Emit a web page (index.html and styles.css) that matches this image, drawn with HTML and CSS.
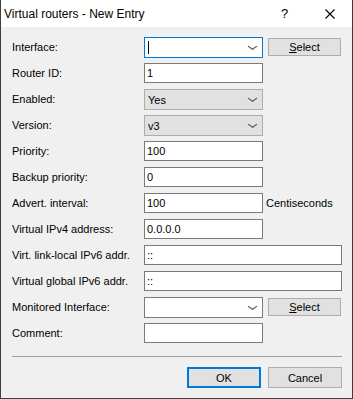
FILE: index.html
```html
<!DOCTYPE html>
<html>
    <head>
        <title> Virtual routers - New Entry </title>
        <meta charset="utf-8"/>
        <link rel="stylesheet" href="styles.css">
    </head>
    <body>
        <div class="dialog">

            <header class="titlebar">
                <span class="title">Virtual routers - New Entry</span>
                <span class="caption-button help">?</span>
                <span class="caption-button close">
                    <svg width="10" height="10" viewBox="0 0 10 10">
                        <path d="M0.5 0.5 L9.5 9.5 M9.5 0.5 L0.5 9.5" stroke="#000" stroke-width="1.1" fill="none"/>
                    </svg>
                </span>
            </header>

            <form class="form">

                <label>Interface:</label>
                <div class="field">
                    <div class="combo editable focused"><span class="caret"></span><span class="chevron"></span></div>
                    <button type="button" class="btn select"><u>S</u>elect</button>
                </div>

                <label>Router ID:</label>
                <div class="field"><div class="input">1</div></div>

                <label>Enabled:</label>
                <div class="field"><div class="combo">Yes<span class="chevron"></span></div></div>

                <label>Version:</label>
                <div class="field"><div class="combo">v3<span class="chevron"></span></div></div>

                <label>Priority:</label>
                <div class="field"><div class="input">100</div></div>

                <label>Backup priority:</label>
                <div class="field"><div class="input">0</div></div>

                <label>Advert. interval:</label>
                <div class="field"><div class="input">100</div><span class="unit">Centiseconds</span></div>

                <label>Virtual IPv4 address:</label>
                <div class="field"><div class="input">0.0.0.0</div></div>

                <label>Virt. link-local IPv6 addr.</label>
                <div class="field"><div class="input wide">::</div></div>

                <label>Virtual global IPv6 addr.</label>
                <div class="field"><div class="input wide">::</div></div>

                <label>Monitored Interface:</label>
                <div class="field">
                    <div class="combo editable"><span class="chevron"></span></div>
                    <button type="button" class="btn select"><u>S</u>elect</button>
                </div>

                <label>Comment:</label>
                <div class="field"><div class="input"></div></div>

            </form>

            <div class="separator"></div>

            <footer class="actions">
                <button type="button" class="btn default">OK</button>
                <button type="button" class="btn">Cancel</button>
            </footer>

        </div>
    </body>
</html>
```

FILE: styles.css
```css
* {
    margin: 0;
    padding: 0;
    box-sizing: border-box;
}

body {
    width: 353px;
    height: 399px;

    background-color: #f0f0f0;
    font-family: 'Liberation Sans', Arial, sans-serif;
    font-size: 11px;
    color: #000;
}

.dialog {
    width: 353px;
    height: 399px;

    background-color: #f0f0f0;
    border: 1px solid #3f3f3f;
    border-top: none;

    display: flex;
    flex-direction: column;
}

/* title bar */

.titlebar {
    height: 27px;

    background-color: #fff;

    display: flex;
    align-items: center;
}

.titlebar .title {
    flex: 1;
    padding-left: 3px;

    font-size: 12px;
}

.titlebar .caption-button {
    width: 45px;
    height: 27px;

    display: flex;
    justify-content: center;
    align-items: center;
}

.titlebar .help {
    font-size: 13px;
}

/* form */

.form {
    padding: 10px 10px 0 11px;

    display: grid;
    grid-template-columns: 132px 1fr;
    grid-auto-rows: 21px;
    row-gap: 5px;
}

.form label {
    height: 20px;

    display: flex;
    align-items: center;
}

.form .field {
    display: flex;
    align-items: flex-start;
    gap: 5px;
}

.input,
.combo {
    width: 119px;
    height: 20px;
    padding-left: 2px;

    border: 1px solid #7a7a7a;
    background-color: #fff;

    display: flex;
    align-items: center;
}

.input.wide {
    width: 198px;
}

.combo {
    position: relative;
    height: 21px;
    padding-left: 3px;

    border-color: #adadad;
    background-color: #e1e1e1;
}

.combo.editable {
    border-color: #7a7a7a;
    background-color: #fff;
}

.combo.focused {
    border-color: #0078d7;
}

.combo .caret {
    width: 1px;
    height: 13px;

    background-color: #000;
}

.combo .chevron {
    position: absolute;
    right: 7px;
    top: 6px;

    width: 5px;
    height: 5px;

    border-right: 1px solid #606060;
    border-bottom: 1px solid #606060;
    transform: scaleX(1.4) rotate(45deg);
}

.unit {
    height: 20px;
    margin-left: -2px;

    display: flex;
    align-items: center;
}

/* buttons */

.btn {
    width: 74px;
    height: 21px;

    border: 1px solid #adadad;
    background-color: #e1e1e1;
    font-family: 'Liberation Sans', Arial, sans-serif;
    font-size: 11px;
    color: #000;
}

.btn.select {
    width: 73px;
    height: 18px;
    margin-top: 1px;
}

.btn.default {
    border: 2px solid #0078d7;
}

/* footer */

.separator {
    height: 1px;
    margin: 12px 10px 0 11px;

    background-color: #a0a0a0;
}

.actions {
    padding: 10px 10px 0 0;

    display: flex;
    justify-content: flex-end;
    gap: 7px;
}
```
